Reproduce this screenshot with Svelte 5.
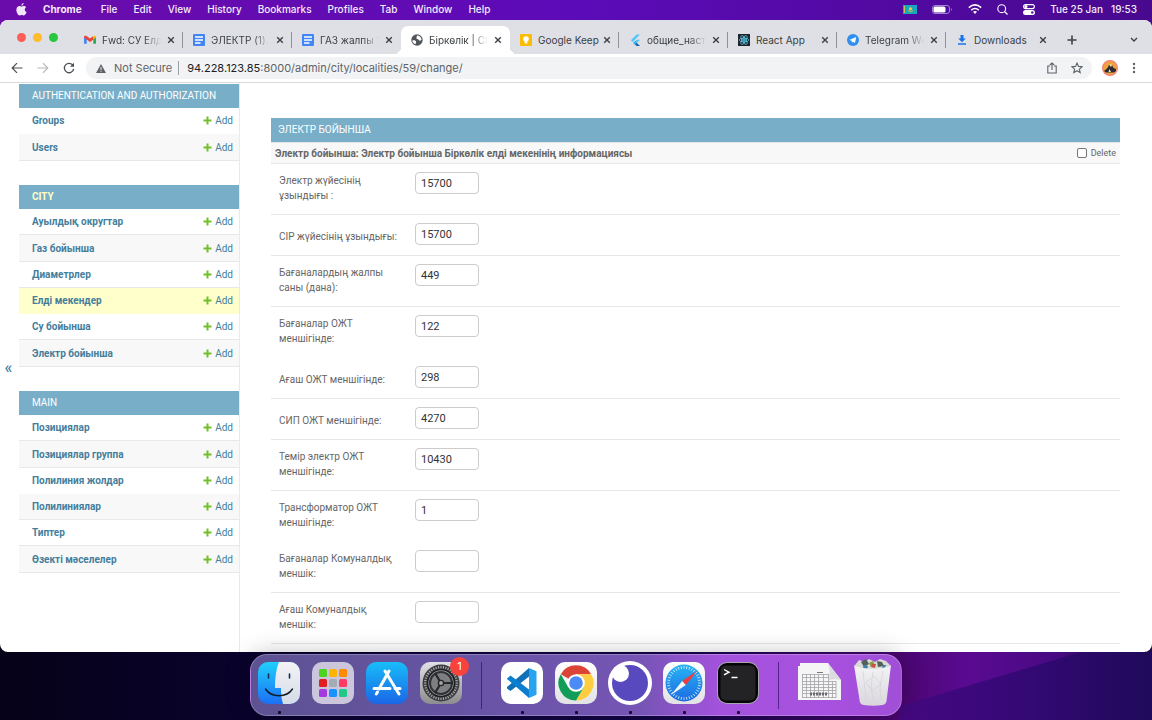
<script>
  const menus = ['File', 'Edit', 'View', 'History', 'Bookmarks', 'Profiles', 'Tab', 'Window', 'Help'];

  const tabs = [
    { icon: 'gmail', title: 'Fwd: СУ Елд', fade: true },
    { icon: 'docs', title: 'ЭЛЕКТР (1).', fade: true },
    { icon: 'docs', title: 'ГАЗ жалпы 1', fade: true },
    { icon: 'globe', title: 'Біркөлік | Ch', active: true, fade: true },
    { icon: 'keep', title: 'Google Keep' },
    { icon: 'flutter', title: 'общие_наст', fade: true },
    { icon: 'react', title: 'React App' },
    { icon: 'telegram', title: 'Telegram We', fade: true },
    { icon: 'download', title: 'Downloads' }
  ];

  const groups = [
    { name: 'AUTHENTICATION AND AUTHORIZATION', rows: [{ name: 'Groups', plain: true }, { name: 'Users' }] },
    {
      name: 'CITY',
      current: true,
      rows: [
        { name: 'Ауылдық округтар' },
        { name: 'Газ бойынша' },
        { name: 'Диаметрлер' },
        { name: 'Елді мекендер', current: true, plain: true },
        { name: 'Су бойынша' },
        { name: 'Электр бойынша' }
      ]
    },
    {
      name: 'MAIN',
      rows: [
        { name: 'Позициялар' },
        { name: 'Позициялар группа' },
        { name: 'Полилиния жолдар', plain: true },
        { name: 'Полилиниялар' },
        { name: 'Типтер' },
        { name: 'Өзекті мәселелер' }
      ]
    }
  ];

  let fields = $state([
    { label: 'Электр жүйесінің ұзындығы :', value: '15700' },
    { label: 'СІР жүйесінің ұзындығы:', value: '15700', single: true },
    { label: 'Бағаналардың жалпы саны (дана):', value: '449' },
    { label: 'Бағаналар ОЖТ меншігінде:', value: '122', plain: true },
    { label: 'Ағаш ОЖТ меншігінде:', value: '298', single: true },
    { label: 'СИП ОЖТ меншігінде:', value: '4270', single: true },
    { label: 'Темір электр ОЖТ меншігінде:', value: '10430' },
    { label: 'Трансформатор ОЖТ меншігінде:', value: '1', plain: true },
    { label: 'Бағаналар Комуналдық меншік:', value: '' },
    { label: 'Ағаш Комуналдық меншік:', value: '' }
  ]);

  const dock = [
    { icon: 'finder', running: true },
    { icon: 'launchpad' },
    { icon: 'appstore' },
    { icon: 'settings', badge: '1' },
    { icon: 'sep' },
    { icon: 'vscode', running: true },
    { icon: 'chrome', running: true },
    { icon: 'insomnia', running: true },
    { icon: 'safari', running: true },
    { icon: 'terminal', running: true },
    { icon: 'sep' },
    { icon: 'sheet' },
    { icon: 'trash' }
  ];

  const padColors = ['#4fd321', '#ffb400', '#ff8a00', '#e02020', '#a3acb3', '#ff3b64', '#a43be0', '#1693ff', '#1fc98a'];
  const ticks = Array.from({ length: 36 }, (_, i) => i * 10);
  const teeth = Array.from({ length: 40 }, (_, i) => i * 9);
</script>

{#snippet favicon(name)}
  <svg class="fav" viewBox="0 0 12 12" aria-hidden="true">
    {#if name === 'gmail'}
      <path d="M0 2.6v7.1h2.7V5.2z" fill="#4285f4" />
      <path d="M12 2.6v7.1H9.3V5.2z" fill="#34a853" />
      <path d="M0 3.2C0 1.6 1.6 1.3 2.6 2L6 4.6 9.4 2v3.4L6 8 0 3.6z" fill="#ea4335" />
      <path d="M9.3 2.1C10.400 1.300 12 1.700 12 3.200L9.300 5.500z" fill="#fbbc04" />
    {:else if name === 'docs'}
      <rect width="12" height="12" rx="1" fill="#4285f4" />
      <path d="M2 3h8M2 6h8M2 9h5.500" stroke="#fff" stroke-width="1.400" />
    {:else if name === 'globe'}
      <circle cx="6" cy="6" r="5.700" fill="#50555b" />
      <path d="M1.300 6.500C3 6 4.500 6.500 5 7.500c.5 1-.5 1.200-.3 2.800C3 10 1.500 8.500 1.300 6.500zM6 1.500c-.8 1 .2 1.300-.5 2.200C5 4.500 6 5 7 5.300c1.200.4 1 1.700 2.200 1.500.6-.2.800-.8 1.400-1C10.500 3.500 8.500 1.500 6 1.500z" fill="#fff" />
    {:else if name === 'keep'}
      <rect width="12" height="12" rx="1" fill="#fbbc04" />
      <circle cx="6" cy="5" r="2.800" fill="#fff" />
      <path d="M4.700 7h2.600v2.600H4.700z" fill="#fff" />
    {:else if name === 'flutter'}
      <path d="M7.600.5H11L3.600 7.900 1.900 6.200z" fill="#54c5f8" />
      <path d="M7.600 5.700H11L7.800 8.900 6.100 7.200z" fill="#54c5f8" />
      <path d="M4.400 8.900l1.700-1.700L11 12H7.600z" fill="#1565b0" />
      <path d="M4.400 8.900l1.700-1.700 1.700 1.700-1.700 1.700z" fill="#29b6f6" />
    {:else if name === 'react'}
      <rect width="12" height="12" fill="#20232a" />
      <g fill="none" stroke="#61dafb" stroke-width=".7">
        <ellipse cx="6" cy="6" rx="5" ry="1.900" />
        <ellipse cx="6" cy="6" rx="5" ry="1.900" transform="rotate(60 6 6)" />
        <ellipse cx="6" cy="6" rx="5" ry="1.900" transform="rotate(120 6 6)" />
      </g>
      <circle cx="6" cy="6" r="1" fill="#61dafb" />
    {:else if name === 'telegram'}
      <circle cx="6" cy="6" r="6" fill="#2e8fee" />
      <path d="M2.300 5.900l6.900-2.800-1.200 6-2-1.400-1.100 1.100-.2-2z" fill="#fff" />
    {:else}
      <path d="M4.500 1h3v3.500h2.300L6 8.200 2.200 4.500h2.300zM2 9.200h8v1.500H2z" fill="#1a73e8" />
    {/if}
  </svg>
{/snippet}

{#snippet app(name)}
  <svg class="art" viewBox="0 0 42 42" aria-hidden="true">
    {#if name === 'finder'}
      <rect width="42" height="42" rx="10" fill="url(#g-finder)" />
      <path d="M21 0h11a10 10 0 0 1 10 10v22a10 10 0 0 1-10 10h-7c-1.500-5-2-10-2-16h-6c0-11 1.500-20 4-26z" fill="url(#g-face)" />
      <path d="M10.500 12v4M31.500 12v4" stroke="#15314f" stroke-width="1.600" stroke-linecap="round" />
      <path d="M7.500 27c6 9 21 9 27 0" fill="none" stroke="#111c2a" stroke-width="1.400" stroke-linecap="round" />
    {:else if name === 'launchpad'}
      <rect width="42" height="42" rx="10" fill="#cbc6dc" />
      {#each padColors as color, i}
        <rect x={7 + (i % 3) * 10} y={7 + Math.floor(i / 3) * 10} width="8" height="8" rx="1.500" fill={color} />
      {/each}
    {:else if name === 'appstore'}
      <rect width="42" height="42" rx="10" fill="url(#g-store)" />
      <g stroke="#fff" stroke-width="3" stroke-linecap="round">
        <path d="M23 9L13 27M19 9l14 23M8 26.500h16M29 26.500h5M11.500 30l-1.200 2" />
      </g>
    {:else if name === 'settings'}
      <rect width="42" height="42" rx="10" fill="url(#g-set)" />
      <circle cx="21" cy="21" r="18.500" fill="#3c3d40" />
      <g stroke="#a9abad" stroke-width="1.100">
        {#each teeth as a}
          <path d="M21 4v2.500" transform="rotate({a} 21 21)" />
        {/each}
      </g>
      <circle cx="21" cy="21" r="13.500" fill="#9a9c9e" stroke="#1e1f21" stroke-width="1.600" />
      <circle cx="21" cy="21" r="11" fill="#7d7f81" stroke="#303134" stroke-width="2" />
      <path d="M21 21l-6-10M21 21h12M21 21l-6 10" stroke="#26272a" stroke-width="2.200" />
      <circle cx="21" cy="21" r="2.600" fill="#a2a4a6" stroke="#26272a" stroke-width="1.400" />
    {:else if name === 'vscode'}
      <rect width="42" height="42" rx="10" fill="#fff" />
      <path d="M28 6v8.500L9.500 29 6 26.500V25z" fill="#0f70b7" />
      <path d="M6 16.500L9.500 13.500 28 27.500V36L6 17z" fill="#0a7fd0" />
      <path d="M28 6l7.500 3.200v23.600L28 36z" fill="#2aa3ee" />
    {:else if name === 'chrome'}
      <rect width="42" height="42" rx="10" fill="url(#g-white)" />
      <path d="M21 21L5.800 12.200A17.500 17.500 0 0 1 36.200 12.200H21z" fill="#db4437" />
      <path d="M21 12.200h15.200A17.500 17.500 0 0 1 21 38.500l7.600-13.100z" fill="#ffcd40" />
      <path d="M13.400 25.400L5.800 12.200A17.500 17.500 0 0 0 21 38.500l7.600-13.100z" fill="#0f9d58" />
      <circle cx="21" cy="21" r="8.800" fill="#fff" />
      <circle cx="21" cy="21" r="6.800" fill="#4c8bf5" />
    {:else if name === 'insomnia'}
      <circle cx="21" cy="21" r="22" fill="#fff" />
      <circle cx="21" cy="21" r="18" fill="#5849be" />
      <circle cx="11.500" cy="11.500" r="8.500" fill="#fff" />
    {:else if name === 'safari'}
      <rect width="42" height="42" rx="10" fill="url(#g-white)" />
      <circle cx="21" cy="21" r="18.500" fill="url(#g-safari)" />
      <g stroke="#d9f0ff" stroke-width=".8">
        {#each ticks as a}
          <path d="M21 4v2.800" transform="rotate({a} 21 21)" />
        {/each}
      </g>
      <path d="M34 9L19.200 19l3.600 4z" fill="#ef3b3b" />
      <path d="M8 33l11.200-14 3.600 4z" fill="#f4f6f8" />
    {:else if name === 'terminal'}
      <rect width="42" height="42" rx="10" fill="#a7a4b0" />
      <rect x="1" y="1" width="40" height="40" rx="9" fill="#050505" />
      <rect x="3.500" y="3.500" width="35" height="35" rx="5" fill="#232325" />
      <path d="M7 7.500l5 2.700-5 2.700M14.500 15.500h6" fill="none" stroke="#fff" stroke-width="1.400" />
    {:else if name === 'sheet'}
      <path d="M0 4h2V1h28l13 17v20H0z" fill="#f5f5f6" />
      <path d="M30 1l13 17c-4-1-8-1-12 0 1-6 1-12-1-17z" fill="#dcdce0" />
      <g stroke="#a3a3a7" stroke-width=".8">
        <path d="M4 12.500h27M4 15.500h27M4 19.500h34M4 22.500h34M4 25.500h34M4 28.500h34M4 31.500h34M4 35.500h34" />
        <path d="M4.500 12v24M8.500 12v24M12.500 12v24M16.500 12v24M20.500 12v24M25.500 12v24M30.500 12v24M34.500 19v17M38 19v17" />
      </g>
      <path d="M12 32h18" stroke="#6a6a70" stroke-width="3" stroke-dasharray="2 1" />
      <path d="M19 10.500h6" stroke="#77777c" />
    {:else}
      <path d="M3 3l4-5 6 2 4-3 6 3 5-3 6 2 4 4-3 4H6z" fill="#d8dad6" />
      <path d="M9 0l5-3 3 5-5 3zM25-1l5 1 2 4-6 1z" fill="#56605a" />
      <path d="M17 1l4-2 2 4-4 2z" fill="#8a9b3d" />
      <path d="M20 2l4 0-1 4-4-1z" fill="#c4543f" />
      <path d="M12 3l4 1-1 3-4-1zM31 3l3 0-1 3-3 0z" fill="#3f7fa5" />
      <path d="M2 3c8 5 29 5 37 0l-4.500 36c-.3 2-1.500 3.500-4 4-6 1-13 1-19 0-2.500-.5-3.500-2-3.800-4z" fill="url(#g-bin)" />
      <path d="M11 9l3 28M21 10l-2 16 3 14M31 9l-3 17 1 12M14 20l8-6 7 8-9 7z" fill="none" stroke="#cfcfd4" stroke-width="1" opacity=".6" />
    {/if}
  </svg>
{/snippet}

<svg class="defs" aria-hidden="true" width="0" height="0">
  <defs>
    <linearGradient id="g-finder" x2="0" y2="1"><stop stop-color="#1fd0fb" /><stop offset="1" stop-color="#1c6ff5" /></linearGradient>
    <linearGradient id="g-face" x2="0" y2="1"><stop stop-color="#f4f3f6" /><stop offset="1" stop-color="#d4dce8" /></linearGradient>
    <linearGradient id="g-store" x2="0" y2="1"><stop stop-color="#18bdf9" /><stop offset="1" stop-color="#1a66e6" /></linearGradient>
    <linearGradient id="g-set" x2="0" y2="1"><stop stop-color="#dfe2e6" /><stop offset="1" stop-color="#8d8c8e" /></linearGradient>
    <linearGradient id="g-white" x2="0" y2="1"><stop stop-color="#fff" /><stop offset="1" stop-color="#e2e1e4" /></linearGradient>
    <linearGradient id="g-safari" x2="0" y2="1"><stop stop-color="#28b4f5" /><stop offset="1" stop-color="#1c6be0" /></linearGradient>
    <linearGradient id="g-bin" x2="0" y2="1"><stop stop-color="#f3f2f4" /><stop offset="1" stop-color="#d9d7dd" /></linearGradient>
  </defs>
</svg>

<div class="desktop">
  <header class="menubar">
    <svg class="apple" viewBox="0 0 12 14" aria-hidden="true">
      <path d="M8.300 0c.1 1.400-1.100 2.900-2.500 2.900C5.700 1.500 6.900.2 8.300 0zM6 3.900c.6 0 1.300-.7 2.500-.7 1 0 2 .5 2.600 1.400-2.200 1.300-1.900 4.300.5 5.200C11 11.600 9.800 13.500 8.700 13.500c-.9 0-1.300-.6-2.400-.6s-1.500.6-2.400.6C2.400 13.500.4 10.300.4 7.500c0-2.700 1.700-4.200 3.400-4.200 1 0 1.700.6 2.200.6z" fill="#efe6f8" />
    </svg>
    <button class="appname">Chrome</button>
    {#each menus as m}
      <button>{m}</button>
    {/each}
    <div class="status">
      <svg width="14" height="9" viewBox="0 0 14 9" aria-hidden="true"><rect width="14" height="9" fill="#17a9bd" /><path d="M1.500 1v7" stroke="#c6c14a" /><circle cx="7.500" cy="3.800" r="1.600" fill="#f2c94c" /><path d="M5 5.500q2.500 2.500 5 0" fill="none" stroke="#d9b43a" /></svg>
      <svg width="21" height="9" viewBox="0 0 21 9" aria-hidden="true"><rect x=".5" y=".5" width="17" height="8" rx="2.500" fill="none" stroke="#a184d8" /><rect x="1.500" y="1.500" width="12" height="6" rx="1.500" fill="#fff" /><path d="M19 3v3q1.500-1.500 0-3" fill="#c5b2ea" /></svg>
      <svg width="14" height="10" viewBox="0 0 14 10" aria-hidden="true"><g fill="none" stroke="#fff" stroke-width="1.500"><path d="M.8 3.600q6.200-5.400 12.400 0M3.200 6.100q3.800-3.200 7.600 0" /></g><path d="M5 7.800q2-1.500 4 0L7 10z" fill="#fff" /></svg>
      <svg width="11" height="11" viewBox="0 0 11 11" aria-hidden="true"><circle cx="4.700" cy="4.700" r="3.900" fill="none" stroke="#fff" stroke-width="1.100" /><path d="M7.500 7.500l3 3" stroke="#fff" stroke-width="1.200" /></svg>
      <svg width="12" height="11" viewBox="0 0 12 11" aria-hidden="true"><rect x=".6" y=".6" width="10.800" height="4" rx="2" fill="none" stroke="#fff" stroke-width="1.100" /><circle cx="3" cy="2.600" r="1.500" fill="#fff" /><rect y="6" width="12" height="5" rx="2.500" fill="#fff" /><circle cx="9.300" cy="8.500" r="1.300" fill="#5a17ad" /></svg>
      <span class="clock"><span>Tue 25 Jan</span><span>19:53</span></span>
    </div>
  </header>

  <main class="window">
    <div class="tabstrip">
      <div class="lights"><i class="red"></i><i class="amber"></i><i class="green"></i></div>
      {#each tabs as t, i}
        <div class="tab" class:active={t.active} class:ruled={!t.active && !tabs[i + 1]?.active && i < tabs.length - 1}>
          {@render favicon(t.icon)}
          <span class="title" class:fade={t.fade}>{t.title}</span>
          <button class="close" aria-label="Close tab">
            <svg width="8" height="8" viewBox="0 0 8 8" aria-hidden="true"><path d="M1.200 1.200l5.600 5.600M6.800 1.200L1.200 6.800" stroke="#3c4043" stroke-width="1.400" /></svg>
          </button>
        </div>
      {/each}
      <button class="newtab" aria-label="New tab">
        <svg width="10" height="10" viewBox="0 0 10 10" aria-hidden="true"><path d="M5 .5v9M.5 5h9" stroke="#3c4043" stroke-width="1.600" /></svg>
      </button>
      <button class="tabsearch" aria-label="Search tabs">
        <svg width="8" height="6" viewBox="0 0 8 6" aria-hidden="true"><path d="M1 1l3 3 3-3" fill="none" stroke="#3c4043" stroke-width="1.400" /></svg>
      </button>
    </div>

    <div class="toolbar">
      <button aria-label="Back"><svg width="12" height="12" viewBox="0 0 12 12" aria-hidden="true"><path d="M11.500 6H1.500M6 1.200L1.200 6 6 10.800" fill="none" stroke="#4a4e52" stroke-width="1.200" /></svg></button>
      <button aria-label="Forward"><svg width="12" height="12" viewBox="0 0 12 12" aria-hidden="true"><path d="M.5 6h10M6 1.200L10.800 6 6 10.800" fill="none" stroke="#b6b9bd" stroke-width="1.200" /></svg></button>
      <button aria-label="Reload"><svg width="12" height="12" viewBox="0 0 12 12" aria-hidden="true"><path d="M10 3.400A4.700 4.700 0 1 0 10.700 7" fill="none" stroke="#4a4e52" stroke-width="1.300" /><path d="M11 .8v4H7z" fill="#4a4e52" /></svg></button>
      <div class="omnibox">
        <svg width="10" height="9" viewBox="0 0 10 9" aria-hidden="true"><path d="M5 0l5 9H0z" fill="#5f6368" /><path d="M5 3v3M5 6.800v1" stroke="#f1f3f4" /></svg>
        <span class="secure">Not Secure</span>
        <span class="url"><b>94.228.123.85</b>:8000/admin/city/localities/59/change/</span>
        <button aria-label="Share"><svg width="10" height="12" viewBox="0 0 10 12" aria-hidden="true"><path d="M3 4H.8v7h8.400V4H7M5 8V1M2.800 3L5 .9 7.200 3" fill="none" stroke="#5f6368" stroke-width="1.100" /></svg></button>
        <button aria-label="Bookmark"><svg width="12" height="12" viewBox="0 0 12 12" aria-hidden="true"><path d="M6 1.100l1.500 3.300 3.600.3-2.700 2.400.8 3.500L6 8.700l-3.200 1.900.8-3.500L.9 4.700l3.600-.3z" fill="none" stroke="#5f6368" stroke-width="1.100" /></svg></button>
      </div>
      <button aria-label="Profile"><svg width="16" height="16" viewBox="0 0 16 16" aria-hidden="true"><circle cx="8" cy="8" r="7.400" fill="#f0a33c" stroke="#f0827f" stroke-width="1.200" /><path d="M2 11l3.500-3 1.500-3h3l1.500 3 2.500 1v2l-2 1.500H4z" fill="#2b2b31" /><path d="M7.500 4.500h2.500l-.5 2H8zM7.500 9l1.500 3H6.500z" fill="#f5e3cd" /></svg></button>
      <button aria-label="Menu"><svg width="4" height="12" viewBox="0 0 4 12" aria-hidden="true"><g fill="#5f6368"><circle cx="2" cy="2" r="1.200" /><circle cx="2" cy="6" r="1.200" /><circle cx="2" cy="10" r="1.200" /></g></svg></button>
    </div>

    <div class="page">
      <button class="toggle" aria-label="Toggle navigation">«</button>
      <nav class="sidebar">
        {#each groups as g}
          <table>
            <caption class:current={g.current}><a href="#app">{g.name}</a></caption>
            <tbody>
              {#each g.rows as r}
                <tr class:current={r.current} class:plain={r.plain}>
                  <th scope="row"><a href="#model">{r.name}</a></th>
                  <td>
                    <a href="#add"><svg width="9" height="9" viewBox="0 0 9 9" aria-hidden="true"><path d="M4.500 .5v8M.5 4.500h8" stroke="#70bf2b" stroke-width="2" /></svg>Add</a>
                  </td>
                </tr>
              {/each}
            </tbody>
          </table>
        {/each}
      </nav>

      <form class="content">
        <h2>ЭЛЕКТР БОЙЫНША</h2>
        <h3>
          <span>Электр бойынша: Электр бойынша Біркөлік елді мекенінің информациясы</span>
          <label class="delete"><input type="checkbox" />Delete</label>
        </h3>
        {#each fields as f, i}
          <div class="row" class:single={f.single} class:plain={f.plain}>
            <label for="field-{i}">{f.label}</label>
            <input id="field-{i}" type="text" bind:value={f.value} />
          </div>
        {/each}
      </form>
    </div>
  </main>

  <footer class="dockbar">
    <div class="dock">
      {#each dock as d}
        {#if d.icon === 'sep'}
          <span class="rule"></span>
        {:else}
          <div class="slot">
            {@render app(d.icon)}
            {#if d.badge}<span class="badge">{d.badge}</span>{/if}
            {#if d.running}<i class="dot"></i>{/if}
          </div>
        {/if}
      {/each}
    </div>
  </footer>
</div>

<style>
  :global(body) {
    margin: 0;
    overflow: hidden;
  }
  * {
    box-sizing: border-box;
  }
  svg {
    display: block;
    flex: none;
  }
  .defs {
    position: absolute;
  }
  button {
    padding: 0;
    border: 0;
    background: none;
    color: inherit;
    font: inherit;
  }
  a {
    color: inherit;
    text-decoration: none;
  }
  .desktop {
    height: 100vh;
    display: flex;
    flex-direction: column;
    background:
      linear-gradient(90deg, #6a0cab, #5c0bb8 50%, #48098f) top / 100% 40px no-repeat,
      linear-gradient(90deg, #060218, #0a0330 25%, #15064c 60%, #4a0670 78%, #5a0a92 84%, #4a0a84 91%, #22074c);
    font-family: Inter, "Noto Sans", sans-serif;
  }

  .menubar {
    flex: none;
    height: 20px;
    padding: 0 15px 2px 16px;
    display: flex;
    align-items: center;
    gap: 16px;
    color: #f3ecfb;
    font-size: 10px;
    font-weight: 500;
  }
  .apple {
    width: 11px;
    height: 13px;
  }
  .appname {
    margin-right: 3px;
    font-weight: 700;
  }
  .status {
    margin-left: auto;
    display: flex;
    align-items: center;
    gap: 15px;
  }
  .clock {
    display: flex;
    gap: 8px;
  }

  .window {
    flex: 1;
    min-height: 0;
    display: flex;
    flex-direction: column;
    overflow: hidden;
    border-radius: 8px;
    background: #fff;
  }
  .tabstrip {
    flex: none;
    height: 34px;
    display: flex;
    align-items: flex-end;
    background: #dee0e5;
    color: #3c4043;
    font-size: 10px;
  }
  .lights {
    flex: none;
    width: 74px;
    height: 34px;
    padding-left: 17px;
    display: flex;
    align-items: center;
    gap: 7px;
  }
  .lights i {
    width: 9px;
    height: 9px;
    border-radius: 50%;
  }
  .red { background: #fe5f57; }
  .amber { background: #febb2e; }
  .green { background: #27c83f; }
  .tab {
    position: relative;
    flex: 0 1 109px;
    min-width: 0;
    height: 28px;
    padding: 0 8px 0 10px;
    display: flex;
    align-items: center;
    gap: 6px;
    border-radius: 7px 7px 0 0;
  }
  .tab.active {
    background: #fff;
  }
  .tab.active::before,
  .tab.active::after {
    content: "";
    position: absolute;
    bottom: 0;
    left: -7px;
    width: 7px;
    height: 7px;
    background: radial-gradient(circle at 0 0, #dee0e5 7px, #fff 7px);
  }
  .tab.active::after {
    left: 100%;
    background: radial-gradient(circle at 100% 0, #dee0e5 7px, #fff 7px);
  }
  .tab.ruled::after {
    content: "";
    position: absolute;
    right: 0;
    top: 6px;
    width: 1px;
    height: 16px;
    background: #8f9297;
  }
  .fav {
    width: 12px;
    height: 12px;
  }
  .title {
    flex: 1;
    min-width: 0;
    white-space: nowrap;
  }
  .title.fade {
    -webkit-mask-image: linear-gradient(90deg, #000 72%, transparent);
    mask-image: linear-gradient(90deg, #000 72%, transparent);
  }
  .newtab {
    width: 34px;
    height: 28px;
    padding-left: 12px;
  }
  .tabsearch {
    height: 28px;
    margin-left: auto;
    padding-right: 14px;
  }

  .toolbar {
    flex: none;
    height: 29px;
    padding: 0 16px 0 11px;
    display: flex;
    align-items: center;
    gap: 14px;
    border-bottom: 1px solid #d9dadc;
    font-size: 11px;
  }
  .omnibox {
    flex: 1;
    height: 22px;
    margin: 0 -4px 0 -3px;
    padding: 0 9px 0 10px;
    display: flex;
    align-items: center;
    gap: 8px;
    border-radius: 11px;
    background: #f1f3f4;
    color: #5f6368;
  }
  .secure {
    padding-right: 6px;
    border-right: 1px solid #9aa0a6;
    white-space: nowrap;
  }
  .url {
    flex: 1;
  }
  .url b {
    color: #202124;
    font-weight: 400;
  }
  .omnibox button + button {
    margin-left: 6px;
  }

  .page {
    flex: 1;
    min-height: 0;
    display: flex;
    overflow: hidden;
    color: #666;
    font-family: Roboto, "Noto Sans", sans-serif;
    font-size: 10px;
  }
  .toggle {
    flex: none;
    width: 19px;
    padding-right: 2px;
    color: #447e9b;
    font-size: 16px;
    font-weight: 500;
  }
  .sidebar {
    flex: none;
    width: 221px;
    padding-top: 1px;
    border-right: 1px solid #eaeaea;
    color: #447e9b;
  }
  table {
    width: 100%;
    margin-bottom: 24px;
    border-spacing: 0;
  }
  caption {
    height: 24px;
    padding: 0 13px;
    background: #79aec8;
    color: #fff;
    line-height: 24px;
    text-align: left;
    white-space: nowrap;
  }
  caption.current {
    color: #ffffc8;
    font-weight: 700;
  }
  tr {
    height: 26px;
  }
  tr:nth-child(4n + 2) {
    height: 27px;
  }
  tr:nth-child(even) {
    background: #f8f8f8;
  }
  tr.current {
    background: #ffffcc;
  }
  th,
  td {
    padding: 0 6px 0 13px;
    border-bottom: 1px solid #e8e8e8;
    line-height: 15px;
    text-align: left;
  }
  tr.plain > * {
    border-bottom-color: transparent;
  }
  td a {
    display: flex;
    align-items: center;
    justify-content: flex-end;
    gap: 3px;
  }

  .content {
    flex: 1;
    min-width: 0;
    padding: 35px 32px 0 31px;
  }
  h2,
  h3 {
    margin: 0;
    font-size: 10px;
  }
  h2 {
    height: 24px;
    padding: 0 7px;
    background: #79aec8;
    color: #fff;
    font-weight: 400;
    line-height: 24px;
  }
  h3 {
    height: 22px;
    padding: 0 4px;
    display: flex;
    align-items: center;
    justify-content: space-between;
    border: solid #e6e6e6;
    border-width: 1px 0;
    background: #f8f8f8;
  }
  .delete {
    display: flex;
    align-items: center;
    gap: 4px;
    font-size: 9px;
    font-weight: 400;
  }
  .delete input {
    width: 10px;
    height: 10px;
    margin: 0;
    appearance: none;
    border: 1px solid #767676;
    border-radius: 2px;
    background: #fff;
  }
  .row {
    padding: 8px 8px 11px;
    display: flex;
    align-items: flex-start;
    border-bottom: 1px solid #e6e6e6;
  }
  .row.single {
    padding-bottom: 10px;
  }
  .row.plain {
    border-bottom-color: transparent;
  }
  .row label {
    flex: none;
    width: 136px;
    padding: 1px 10px 0 0;
    line-height: 15px;
  }
  .row.single label {
    padding-top: 6px;
  }
  .row input {
    width: 64px;
    height: 22px;
    padding: 0 5px;
    border: 1px solid #ccc;
    border-radius: 4px;
    background: #fff;
    color: #333;
    font: inherit;
    font-size: 11px;
  }

  .dockbar {
    position: relative;
    flex: none;
    padding: 2px 0 4px;
    display: flex;
    justify-content: center;
  }
  .dockbar::before {
    content: "";
    position: absolute;
    inset: 0 0 0 auto;
    width: 22%;
    background: linear-gradient(90deg, #45087f, #380879 40%, #1f0a5a);
    clip-path: polygon(0 80%, 72% 0, 100% 0, 100% 100%, 0 100%);
  }
  .dock {
    position: relative;
    height: 62px;
    padding: 7px 7px 0;
    display: flex;
    gap: 12px;
    border: 1px solid rgba(255, 255, 255, 0.25);
    border-radius: 17px;
    background: linear-gradient(90deg, #5d5292, #6654a3 32%, #7655b5 60%, #a352dc 72%, #a851e0 88%, #a04fd6);
    box-shadow: 0 0 24px rgba(0, 0, 0, 0.26);
  }
  .slot {
    position: relative;
    width: 42px;
    display: flex;
    flex-direction: column;
    align-items: center;
  }
  .art {
    width: 42px;
    height: 42px;
    overflow: visible;
  }
  .rule {
    width: 1px;
    height: 47px;
    margin: 0 7px;
    background: rgba(50, 15, 110, 0.7);
  }
  .dot {
    width: 3px;
    height: 3px;
    margin-top: 7px;
    border-radius: 1px;
    background: #120a2c;
  }
  .badge {
    position: absolute;
    top: -5px;
    right: -7px;
    width: 19px;
    height: 19px;
    border-radius: 50%;
    background: #f8423c;
    color: #fff;
    font-size: 11px;
    line-height: 19px;
    text-align: center;
  }
</style>
